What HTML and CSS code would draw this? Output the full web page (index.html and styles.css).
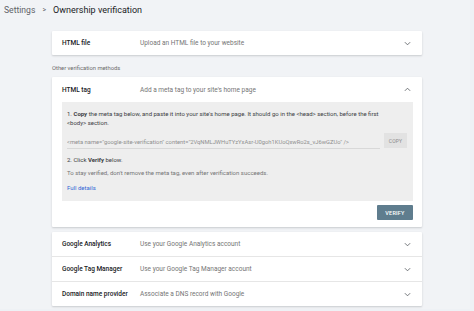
FILE: index.html
```html
<!DOCTYPE html>
<html>
<head>
<meta charset="utf-8">
<link rel="stylesheet" href="styles.css">
</head>
<body>
<div class="page">
  <div class="crumbs">
    <span class="crumb">Settings</span>
    <span class="sep">&gt;</span>
    <span class="title">Ownership verification</span>
  </div>
  <div class="content">
    <div class="card">
      <div class="row">
        <span class="label">HTML file</span>
        <span class="desc">Upload an HTML file to your website</span>
        <svg class="chev" viewBox="0 0 8 5" width="7" height="5"><polyline points="1,1 4,4 7,1" fill="none" stroke="#5f6368" stroke-width="1"/></svg>
      </div>
    </div>
    <div class="section">Other verification methods</div>
    <div class="card open">
      <div class="row">
        <span class="label">HTML tag</span>
        <span class="desc">Add a meta tag to your site's home page</span>
        <svg class="chev" viewBox="0 0 8 5" width="7" height="5"><polyline points="1,4 4,1 7,4" fill="none" stroke="#5f6368" stroke-width="1"/></svg>
      </div>
      <div class="panel">
        <p class="step">1. <b>Copy</b> the meta tag below, and paste it into your site's home page. It should go in the &lt;head&gt; section, before the first &lt;body&gt; section.</p>
        <div class="metarow">
          <span class="meta">&lt;meta name="google-site-verification" content="2VqNMLJWHuTYzYxAsr-U0goh1KUoQxwRo2s_vJ6wGZUo" /&gt;</span>
          <span class="copy">COPY</span>
        </div>
        <p class="step2">2. Click <b>Verify</b> below.</p>
        <p class="note">To stay verified, don't remove the meta tag, even after verification succeeds.</p>
        <p class="link">Full details</p>
      </div>
      <div class="actions"><span class="verify">VERIFY</span></div>
    </div>
    <div class="card list">
      <div class="row">
        <span class="label">Google Analytics</span>
        <span class="desc">Use your Google Analytics account</span>
        <svg class="chev" viewBox="0 0 8 5" width="7" height="5"><polyline points="1,1 4,4 7,1" fill="none" stroke="#5f6368" stroke-width="1"/></svg>
      </div>
      <div class="row">
        <span class="label">Google Tag Manager</span>
        <span class="desc">Use your Google Tag Manager account</span>
        <svg class="chev" viewBox="0 0 8 5" width="7" height="5"><polyline points="1,1 4,4 7,1" fill="none" stroke="#5f6368" stroke-width="1"/></svg>
      </div>
      <div class="row">
        <span class="label">Domain name provider</span>
        <span class="desc">Associate a DNS record with Google</span>
        <svg class="chev" viewBox="0 0 8 5" width="7" height="5"><polyline points="1,1 4,4 7,1" fill="none" stroke="#5f6368" stroke-width="1"/></svg>
      </div>
    </div>
  </div>
</div>
</body>
</html>
```
FILE: styles.css
```css
html, body {
  margin: 0;
  padding: 0;
}
body {
  background: #eef1f5;
  font-family: Roboto, "Liberation Sans", sans-serif;
  width: 474px;
  height: 311px;
  overflow: hidden;
}
.page {
  background: #f1f3f6;
  margin: 0 4px 0 0;
  height: 310px;
}
.crumbs {
  height: 22px;
  display: flex;
  align-items: center;
  padding-left: 4px;
  font-size: 8.6px;
  color: #5f6368;
  margin-top: -1px;
}
.sep {
  margin: 0 7px 0 7px;
  font-size: 7px;
}
.title {
  color: #202124;
  font-size: 9px;
}
.content {
  margin-left: 52px;
  width: 370px;
  padding-top: 10px;
}
.card {
  background: #fff;
  box-shadow: 0 1px 2px rgba(60, 64, 67, 0.22);
  border-radius: 1px;
}
.row {
  height: 24px;
  display: flex;
  align-items: center;
  padding-left: 10px;
  padding-right: 11px;
  font-size: 6.5px;
}
.label {
  width: 78px;
  color: #202124;
  font-weight: 500;
}
.desc {
  flex: 1;
  color: #757575;
}
.chev {
  display: block;
}
.section {
  font-size: 5.8px;
  color: #6b6b6b;
  height: 22px;
  line-height: 26px;
}
.open .row {
  height: 25px;
}
.panel {
  background: #eeeeee;
  margin: 0 9px 0 10px;
  padding: 7px 5px 0 5px;
  height: 92px;
  font-size: 6px;
  color: #3c4043;
}
.panel p {
  margin: 0;
}
.step {
  line-height: 9px;
  padding-right: 22px;
}
.metarow {
  display: flex;
  align-items: center;
  margin-top: 6px;
  height: 15px;
}
.meta {
  width: 313px;
  color: #8f8f8f;
  border-bottom: 1px solid #d8d8d8;
  height: 10px;
  line-height: 9px;
  margin-top: 5px;
  font-size: 5.8px;
  white-space: nowrap;
  overflow: hidden;
}
.copy {
  margin-left: 4px;
  width: 23px;
  height: 15px;
  background: #e2e2e2;
  color: #8a8a8a;
  font-size: 5px;
  display: flex;
  align-items: center;
  justify-content: center;
  letter-spacing: 0.2px;
}
.step2 {
  margin-top: 7px !important;
  line-height: 9px;
}
.note {
  margin-top: 4px !important;
  line-height: 9px;
  color: #757575;
}
.link {
  margin-top: 6px !important;
  line-height: 9px;
  color: #3367d6;
}
.actions {
  display: flex;
  justify-content: flex-end;
  padding: 4px 9px 7px 0;
}
.verify {
  width: 36px;
  height: 15px;
  background: #5f7d8e;
  color: #fff;
  font-size: 5.5px;
  font-weight: 500;
  display: flex;
  align-items: center;
  justify-content: center;
  border-radius: 1px;
  letter-spacing: 0.2px;
}
.list {
  margin-top: 5px;
}
.list .row + .row {
  border-top: 1px solid #e6e6e6;
}
```
